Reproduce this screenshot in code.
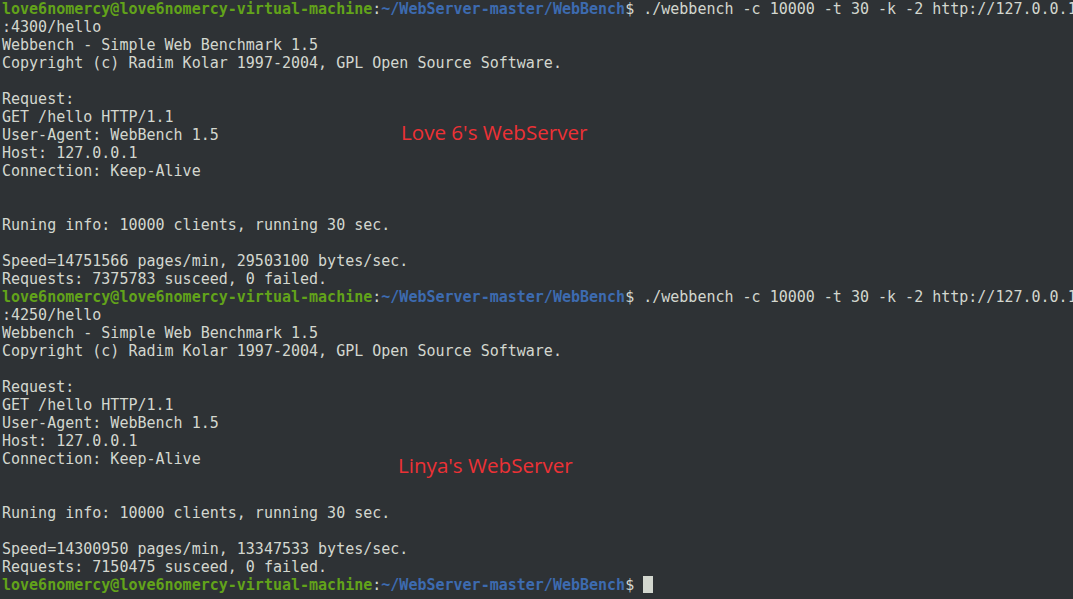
import React from 'react';

type Line =
  | { kind: 'text'; text: string }
  | { kind: 'prompt'; cmd: string; cursor?: boolean };

const USER = 'love6nomercy@love6nomercy-virtual-machine';
const PATH = '~/WebServer-master/WebBench';

const run = (port: string, speed: string, req: string): Line[] => [
  { kind: 'prompt', cmd: ' ./webbench -c 10000 -t 30 -k -2 http://127.0.0.1' },
  { kind: 'text', text: `:${port}/hello` },
  { kind: 'text', text: 'Webbench - Simple Web Benchmark 1.5' },
  { kind: 'text', text: 'Copyright (c) Radim Kolar 1997-2004, GPL Open Source Software.' },
  { kind: 'text', text: '' },
  { kind: 'text', text: 'Request:' },
  { kind: 'text', text: 'GET /hello HTTP/1.1' },
  { kind: 'text', text: 'User-Agent: WebBench 1.5' },
  { kind: 'text', text: 'Host: 127.0.0.1' },
  { kind: 'text', text: 'Connection: Keep-Alive' },
  { kind: 'text', text: '' },
  { kind: 'text', text: '' },
  { kind: 'text', text: 'Runing info: 10000 clients, running 30 sec.' },
  { kind: 'text', text: '' },
  { kind: 'text', text: speed },
  { kind: 'text', text: req },
];

const LINES: Line[] = [
  ...run('4300', 'Speed=14751566 pages/min, 29503100 bytes/sec.', 'Requests: 7375783 susceed, 0 failed.'),
  ...run('4250', 'Speed=14300950 pages/min, 13347533 bytes/sec.', 'Requests: 7150475 susceed, 0 failed.'),
  { kind: 'prompt', cmd: ' ', cursor: true },
];

const App: React.FC = () => {
  return (
    <div className="relative w-[1073px] h-[599px] overflow-hidden bg-[#2e3235] text-[#d3d7cf] pl-[2px] font-['DejaVu_Sans_Mono','Liberation_Mono',monospace] text-[15px]">
      {LINES.map((line, i) => (
        <div key={i} className="h-[18px] leading-[18px] whitespace-pre">
          {line.kind === 'text' ? (
            line.text
          ) : (
            <>
              <span className="text-[#62a31a] font-bold">{USER}</span>
              <span>:</span>
              <span className="text-[#3d6bb0] font-bold">{PATH}</span>
              <span>$</span>
              <span>{line.cmd}</span>
              {line.cursor && (
                <span className="inline-block w-[10px] h-[17px] align-[-3px] bg-[#d3d7cf]" />
              )}
            </>
          )}
        </div>
      ))}

      {/* annotations */}
      <div className="absolute left-[401px] top-[119px] text-[20.6px] leading-[26px] text-[#ec3135] font-['Open_Sans','Noto_Sans',sans-serif]">
        Love 6's WebServer
      </div>
      <div className="absolute left-[398px] top-[452px] text-[20.6px] leading-[26px] text-[#ec3135] font-['Open_Sans','Noto_Sans',sans-serif]">
        Linya's WebServer
      </div>
    </div>
  );
};

export default App;
